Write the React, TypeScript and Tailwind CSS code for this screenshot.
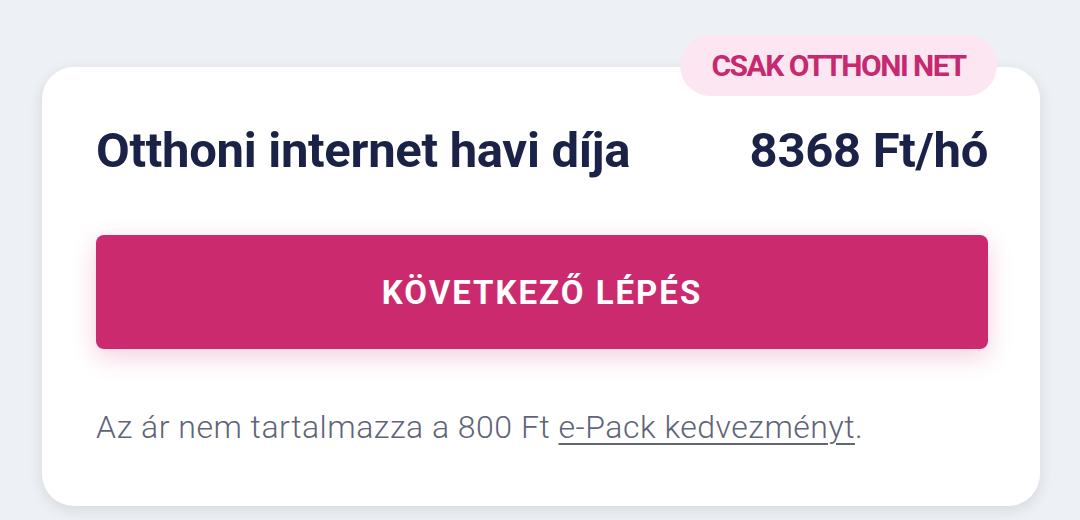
import React from "react";

export default function App() {
  return (
    <div
      className="w-[1080px] h-[520px] bg-[#edf0f4] overflow-hidden pt-[67px] pl-[42px]"
      style={{ fontFamily: "Roboto, 'Liberation Sans', sans-serif" }}
    >
      <div className="relative w-[998px] h-[439px] bg-white rounded-[32px] shadow-[0_4px_14px_rgba(40,50,70,0.12)] pl-[54px] pr-[52px] pt-[60px]">
        <div className="absolute right-[43px] top-[-32px] h-[61px] w-[317px] rounded-full bg-[#fbe6f1] flex items-center justify-center">
          <span className="text-[30px] leading-none font-bold text-[#c7296e] tracking-[-1.5px]">CSAK OTTHONI NET</span>
        </div>
        <div className="flex items-center justify-between h-[46px]">
          <span className="text-[49px] leading-none font-bold text-[#1b2247] tracking-[-0.3px]">Otthoni internet havi díja</span>
          <span className="text-[49px] leading-none font-bold text-[#1b2247] tracking-[-0.3px]">8368 Ft/hó</span>
        </div>
        <button className="mt-[62px] w-full h-[114px] rounded-[8px] bg-[#cc2a6e] shadow-[0_8px_24px_rgba(204,42,110,0.22)] flex items-center justify-center">
          <span className="text-[33px] leading-none font-bold text-white tracking-[2px]">KÖVETKEZŐ LÉPÉS</span>
        </button>
        <p className="mt-[62px] text-[32px] leading-none font-light text-[#5f6478] tracking-[0.5px]">
          Az ár nem tartalmazza a 800 Ft{" "}
          <span className="underline decoration-[2px] underline-offset-[5px]">e-Pack kedvezményt</span>.
        </p>
      </div>
    </div>
  );
}
